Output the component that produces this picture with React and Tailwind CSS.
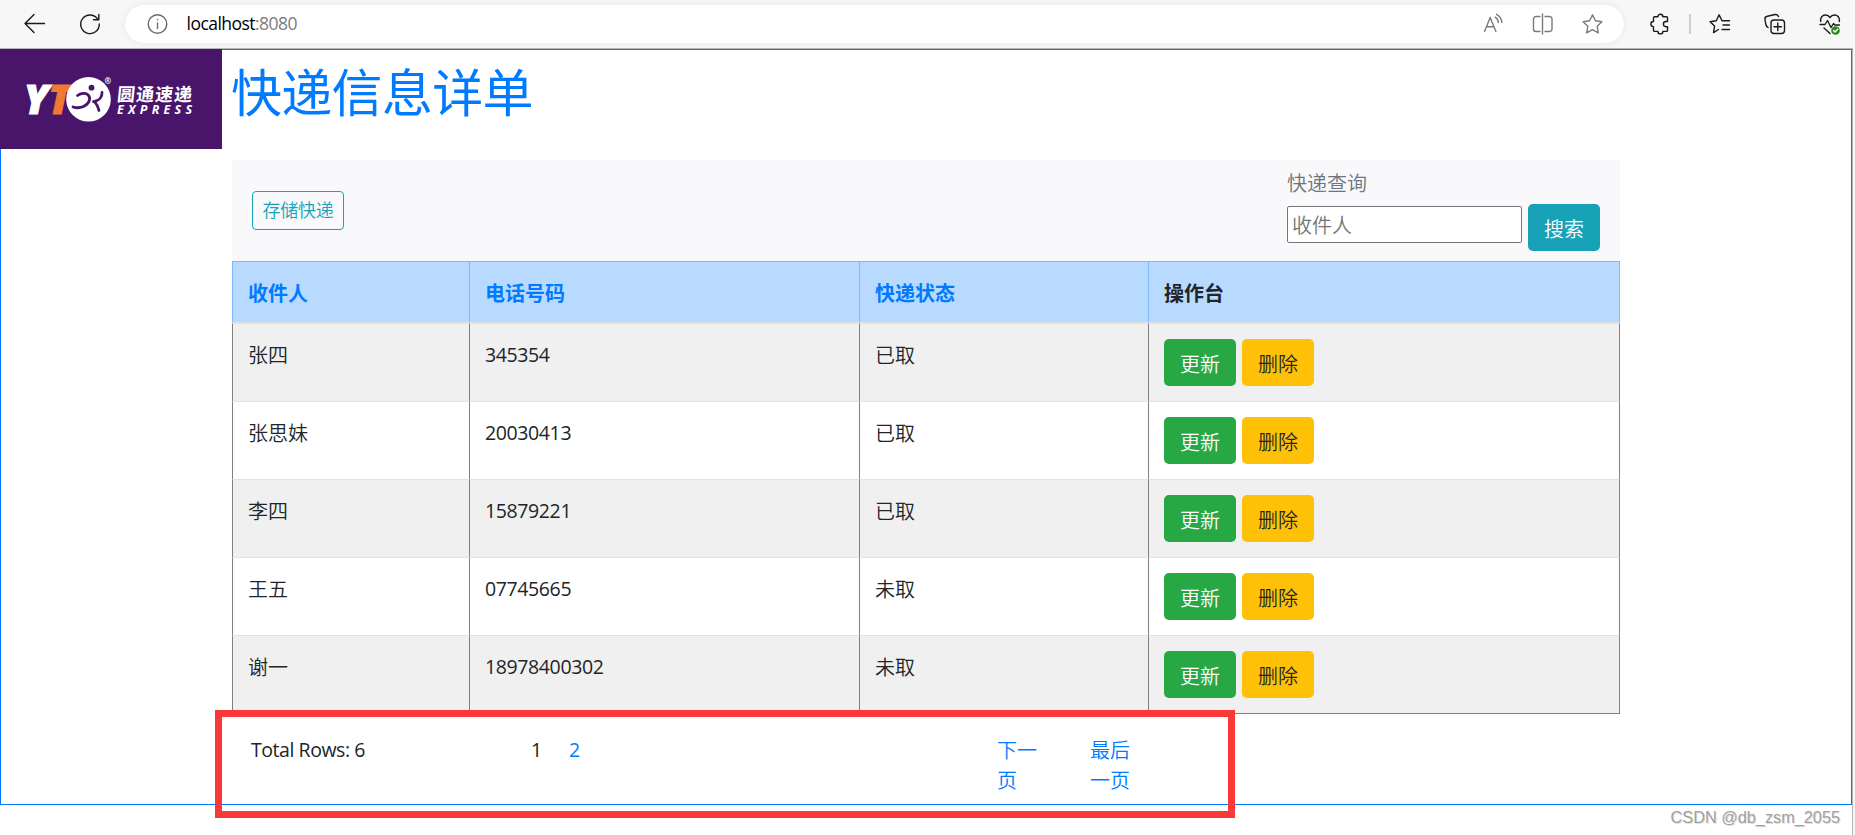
import { useState } from "react";

const YtoLogo = () => (
  <svg className="block h-[100px] w-[222px] shrink-0 bg-[#48156a]" viewBox="0 0 222 100">
    <text
      x="24"
      y="65"
      fontFamily="Open Sans, sans-serif"
      fontWeight="800"
      fontStyle="italic"
      fontSize="40"
      strokeWidth="1.2"
      textLength="47"
      lengthAdjust="spacingAndGlyphs"
    >
      <tspan fill="#fff" stroke="#fff">Y</tspan>
      <tspan fill="#f07a32" stroke="#f07a32">T</tspan>
    </text>
    <circle cx="88.5" cy="50.3" r="22.3" fill="#fff" />
    <g fill="none" stroke="#48156a" strokeLinecap="round">
      <path d="M77.500 46.500c4-3 9.500-3 11.500.500 2 4-1 8.500-5.500 10.500-3.500 1.500-7.500 1.500-10.500.500" strokeWidth="2.800" />
      <path d="M102 43.500c.500 4.500-3 8-8.500 9.200M94.500 53c2.500 2 3.500 5 4.500 8.500" strokeWidth="2.800" />
    </g>
    <circle cx="91.500" cy="38.700" r="2.900" fill="#48156a" />
    <text x="104.500" y="35" fontFamily="Open Sans, sans-serif" fontWeight="700" fontSize="8" fill="#fff">
      ®
    </text>
    <g fill="#fff" transform="skewX(-6)">
      <text x="122" y="52" fontFamily="Noto Sans CJK SC, sans-serif" fontWeight="700" fontSize="18" textLength="75">
        圆通速递
      </text>
    </g>
    <text x="117" y="65" fontFamily="Open Sans, sans-serif" fontWeight="700" fontStyle="italic" fontSize="12.500" fill="#fff" textLength="75">
      EXPRESS
    </text>
  </svg>
);

const Icon = ({ children, className = "text-[#1b1b1b]" }) => (
  <svg
    className={`block h-6 w-6 shrink-0 ${className}`}
    viewBox="0 0 24 24"
    fill="none"
    stroke="currentColor"
    strokeWidth="1.4"
    strokeLinecap="round"
    strokeLinejoin="round"
  >
    {children}
  </svg>
);

const starPath = "M11.500 2.800l2.900 6 6.500.900-4.700 4.600 1.100 6.500-5.800-3.100-5.800 3.100 1.100-6.500L2.100 9.700l6.500-.900z";

const BrowserBar = () => (
  <div className="flex h-12 items-center bg-[#f7f7f7] pl-[23px]">
    <Icon>
      <path d="M21.500 11.500H2M11 2.500l-9 9 9 9" />
    </Icon>
    <Icon className="ml-[31px] text-[#1b1b1b]">
      <path d="M20 7.500A9.300 9.300 0 1 0 21.300 12M20.800 2.500v5.300h-5.300" />
    </Icon>

    {/* ADDRESS */}
    <div className="ml-[23px] flex h-[38px] w-[1499px] items-center rounded-full bg-white pl-5 shadow-[0_0_6px_rgba(0,0,0,0.08)]">
      <Icon className="text-[#6b6b75]">
        <circle cx="12.500" cy="12" r="9.300" />
        <path d="M12.500 11v5.500M12.500 7.500v.300" />
      </Icon>
      <div className="ml-[17.5px] pb-0.5 font-['Open_Sans',sans-serif] text-[17.5px] tracking-[-0.53px] text-black">
        localhost<span className="text-[#7c7c7c]">:8080</span>
      </div>
      <div className="ml-auto flex items-center gap-[26px] pr-[19px]">
        <Icon className="text-[#7a7a80]">
          <path d="M3.500 19.500L9.200 5.500l5.700 14M5.500 14.800h7.400M14.200 5.200c2 1.200 3 3 3 5.300M15.500 2.300c3.500 1.900 5.300 4.700 5.300 8.200" />
        </Icon>
        <Icon className="text-[#7a7a80]">
          <path d="M9 4.500H5A2.500 2.500 0 0 0 2.500 7v10A2.500 2.500 0 0 0 5 19.500h4M14 4.500h4.500A2.500 2.500 0 0 1 21 7v10a2.500 2.500 0 0 1-2.500 2.500H14M11.500 2v20" />
        </Icon>
        <Icon className="text-[#7a7a80]">
          <path d={starPath} />
        </Icon>
      </div>
    </div>

    <Icon className="ml-6 text-[#1b1b1b]">
      <path d="M6.500 4.800h3.400a2.500 2.500 0 0 1 5 0h3.600a1 1 0 0 1 1 1v3.700h-1.500a2.600 2.600 0 0 0 0 5.200h1.500v3.700a1 1 0 0 1-1 1h-3.600a2.500 2.500 0 0 1-5 0H6.500a1 1 0 0 1-1-1v-3.700a2.600 2.600 0 0 1 0-5.200V5.800a1 1 0 0 1 1-1z" />
    </Icon>
    <div className="ml-[17px] h-5 w-0.5 bg-[#cfcfd3]" />
    <Icon className="ml-[17px] text-[#1b1b1b]">
      <path d="M10.500 17.500l-5 3.100 1.100-6.500-4.500-4.400 6.200-.900 2.800-6 2.900 6h7.500M15 13h6.500M14 17.500h7.500" />
    </Icon>
    <Icon className="ml-[31px] text-[#1b1b1b]">
      <rect x="8" y="8" width="13.500" height="13.500" rx="3" />
      <path d="M14.800 11v7.500M11 14.800h7.500M5 15.500C3.500 14.500 3 13.500 2.700 12L2 7.500C1.800 6 2.700 4.600 4.200 4.300l8-1.800c1.500-.300 2.800.600 3.300 2" />
    </Icon>
    <Icon className="ml-[31px] text-[#1b1b1b]">
      <path d="M2.700 9.500C2 5.500 4.500 3 7.500 3c2 0 3.500 1 4.500 2.500C13 4 14.500 3 16.500 3c3 0 5.500 2.500 4.800 6.500M2 12.500h5l2.500-4 3.500 7 2.500-4 1.300 1.500h4.700M6 16l6 5.500" />
      <circle cx="17.500" cy="18.500" r="4.300" fill="#2b8a1c" stroke="none" />
      <path d="M15.500 18.500l1.500 1.500 2.700-2.700" stroke="#fff" />
    </Icon>
  </div>
);

const parcels = [
  { name: "张四", phone: "345354", status: "已取" },
  { name: "张思妹", phone: "20030413", status: "已取" },
  { name: "李四", phone: "15879221", status: "已取" },
  { name: "王五", phone: "07745665", status: "未取" },
  { name: "谢一", phone: "18978400302", status: "未取" },
];

const App = () => {
  const [keyword, setKeyword] = useState("");

  return (
    <div className="relative h-[835px] w-[1855px] overflow-hidden bg-[#f7f7f7] font-['Noto_Sans','Noto_Sans_CJK_SC',sans-serif] text-[#212529]">
      <BrowserBar />

      <div className="h-[787px] w-[1853px] border-r border-t border-[#b4b4b4] bg-white">
        <div className="flex h-[756px] w-[1852px] flex-col border border-[#007bff]">
          {/* HEADER */}
          <div className="-ml-px -mt-px flex h-[100px]">
            <YtoLogo />
            <h1 className="ml-[9px] mt-[11px] font-['Noto_Sans_CJK_SC',sans-serif] text-[51px] font-normal leading-[60px] tracking-[-0.7px] text-[#007bff]">
              快递信息详单
            </h1>
          </div>

          <div className="ml-[231px] mt-[11px] w-[1388px] font-['Noto_Sans_CJK_SC',sans-serif] text-[20px] font-[350] leading-[30px]">
            {/* TOOLBAR */}
            <div className="flex h-[101px] justify-between bg-[#f9f9fb] px-5">
              <button className="mt-[31px] h-[39px] w-[92px] rounded-[4px] border border-[#17a2b8] pb-[3px] text-[18px] leading-[26px] tracking-[-0.25px] text-[#17a2b8]">
                存储快递
              </button>
              <form className="w-[313px] pt-2" onSubmit={(e) => e.preventDefault()}>
                <label className="block text-[#6c757d]">快递查询</label>
                <div className="mt-1.5 flex items-start gap-1.5">
                  <input
                    type="text"
                    value={keyword}
                    onChange={(e) => setKeyword(e.target.value)}
                    placeholder="收件人"
                    className="mt-0.5 h-[37px] w-[235px] rounded-[2px] border border-[#767676] bg-white px-1 placeholder:text-[#757575]"
                  />
                  <button className="h-[47px] w-[72px] rounded-[5px] bg-[#17a2b8] pt-0.5 text-white">搜索</button>
                </div>
              </form>
            </div>

            {/* TABLE */}
            <table className="w-[1388px] table-fixed border-separate border-spacing-0 text-left">
              <colgroup>
                <col className="w-[238px]" />
                <col className="w-[390px]" />
                <col className="w-[289px]" />
                <col className="w-[471px]" />
              </colgroup>
              <thead>
                <tr className="h-[63px] bg-[#b8daff] text-[#007bff]">
                  {["收件人", "电话号码", "快递状态", "操作台"].map((title) => (
                    <th
                      key={title}
                      className="border-b-2 border-r border-t border-b-[#dee2e6] border-r-[#7abaff] border-t-[#7abaff] px-[15px] pt-0.5 font-bold first:border-l first:border-l-[#7abaff] last:text-[#212529]"
                    >
                      {title}
                    </th>
                  ))}
                </tr>
              </thead>
              <tbody>
                {parcels.map((p) => (
                  <tr
                    key={p.phone}
                    className="h-[78px] align-top odd:bg-[#f0f0f0] *:border-b *:border-r *:border-b-[#dee2e6] *:border-r-[#808080] *:px-[15px] *:first:border-l *:first:border-l-[#808080] last:*:border-b-[#808080]"
                  >
                    <td className="pt-4">{p.name}</td>
                    <td className="pt-4 font-['Open_Sans',sans-serif] text-[19.5px] font-normal tracking-[-0.38px]">
                      {p.phone}
                    </td>
                    <td className="pt-4">{p.status}</td>
                    <td className="pt-[15px]">
                      <div className="flex gap-1.5">
                        <button className="h-[47px] w-[72px] rounded-[5px] bg-[#28a745] pt-0.5 text-white">更新</button>
                        <button className="h-[47px] w-[72px] rounded-[5px] bg-[#ffc107] pt-0.5">删除</button>
                      </div>
                    </td>
                  </tr>
                ))}
              </tbody>
            </table>

            {/* PAGINATION */}
            <div className="flex pl-[19px] pt-[21px] text-[#007bff]">
              <div className="w-[280px] font-['Open_Sans',sans-serif] text-[19.5px] font-normal tracking-[-0.45px] text-[#212529]">
                Total Rows: 6
              </div>
              <div className="flex w-[466px] gap-[28px] font-['Open_Sans',sans-serif] text-[19.5px] font-normal">
                <span className="w-2.5 text-[#212529]">1</span>
                <a href="#">2</a>
              </div>
              <a href="#" className="mr-[53px] w-10">下一页</a>
              <a href="#" className="w-10">最后一页</a>
            </div>
          </div>
        </div>
      </div>

      {/* highlight frame over the pagination */}
      <div className="absolute left-[215px] top-[710px] h-[108px] w-[1020px] border-[7px] border-[#fb3838]" />
      <div className="absolute bottom-2 right-[15px] font-['Liberation_Sans',sans-serif] text-[16.3px] leading-5 text-[#a0a0a0] [text-shadow:1px_1px_0_#e2e2e2]">
        CSDN @db_zsm_2055
      </div>
    </div>
  );
};

export default App;
